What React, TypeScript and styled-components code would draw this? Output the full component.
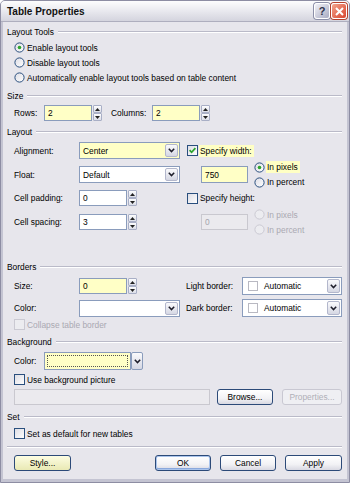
import React from "react";
import styled, { createGlobalStyle } from "styled-components";

type Tone = "yellow" | "white" | "disabled";

const GlobalStyle = createGlobalStyle`
  * { box-sizing: border-box; }
  html, body { margin: 0; padding: 0; background: #ffffff; }
  body {
    font-family: "Liberation Sans", Arial, sans-serif;
    font-size: 8.4px;
    color: #000;
  }
`;

const Window = styled.div`
  width: 350px;
  height: 483px;
  display: flex;
  flex-direction: column;
  background: #c4c4d2;
  border: 1px solid #8d8da3;
  border-radius: 5px 5px 0 0;
  overflow: hidden;
`;

const TitleBar = styled.div`
  height: 21px;
  flex: none;
  display: flex;
  align-items: center;
  padding: 0 2px 0 6px;
  background: linear-gradient(#fdfdfe 0%, #ededf2 40%, #d4d4de 100%);
  border-bottom: 1px solid #aeaebe;
`;

const Title = styled.div`
  flex: 1;
  font-size: 10px;
  font-weight: bold;
  color: #111;
`;

const CaptionButton = styled.div<{ $close?: boolean }>`
  width: 16px;
  height: 16px;
  margin-left: 1px;
  display: flex;
  align-items: center;
  justify-content: center;
  border: 1px solid #ffffff;
  border-radius: 3px;
  font-size: 11px;
  font-weight: bold;
  color: ${(p) => (p.$close ? "#fff" : "#30324a")};
  background: ${(p) =>
    p.$close
      ? "linear-gradient(135deg, #f3a48c, #d9452e)"
      : "linear-gradient(135deg, #f2f2f7, #a8abc2)"};
  box-shadow: 0 0 0 1px ${(p) => (p.$close ? "#b5402c" : "#8c8fa8")};
`;

const Body = styled.div`
  flex: 1;
  margin: 0 2px 3px;
  background: #e7e6ec;
  padding: 4px 5px 0 4px;
  display: flex;
  flex-direction: column;
`;

const Legend = styled.div<{ $mt?: number }>`
  display: flex;
  align-items: center;
  gap: 4px;
  height: 12px;
  margin-top: ${(p) => p.$mt ?? 0}px;

  &::after {
    content: "";
    flex: 1;
    border-top: 1px solid #babac8;
    border-bottom: 1px solid #ffffff;
  }
`;

const Content = styled.div`
  display: flex;
  flex-direction: column;
  padding-left: 7px;
`;

const Row = styled.div<{ $h?: number; $mt?: number }>`
  display: flex;
  align-items: center;
  height: ${(p) => p.$h ?? 17}px;
  margin-top: ${(p) => p.$mt ?? 0}px;
`;

const Half = styled.div<{ $w: number }>`
  display: flex;
  align-items: center;
  width: ${(p) => p.$w}px;
  height: 100%;
`;

const Label = styled.span<{ $w?: number; $disabled?: boolean }>`
  flex: none;
  width: ${(p) => (p.$w ? `${p.$w}px` : "auto")};
  color: ${(p) => (p.$disabled ? "#aaa9b2" : "#000")};
  white-space: nowrap;
`;

const Hl = styled.span<{ $on?: boolean }>`
  background: ${(p) => (p.$on ? "#ffffc4" : "transparent")};
  padding: 1px 2px 1px 1px;
`;

const Field = styled.div<{ $w: number; $tone: Tone; $h?: number }>`
  flex: none;
  width: ${(p) => p.$w}px;
  height: ${(p) => p.$h ?? 16}px;
  display: flex;
  align-items: center;
  padding-left: 3px;
  border: 1px solid ${(p) => (p.$tone === "disabled" ? "#c9c8cf" : "#8a9cbc")};
  background: ${(p) =>
    p.$tone === "yellow" ? "#ffffc6" : p.$tone === "disabled" ? "#ebeaee" : "#ffffff"};
  color: ${(p) => (p.$tone === "disabled" ? "#a5a4ad" : "#000")};
`;

const SelectBox = styled.div<{ $w: number; $tone: Tone; $h?: number }>`
  flex: none;
  width: ${(p) => p.$w}px;
  height: ${(p) => p.$h ?? 17}px;
  display: flex;
  align-items: stretch;
  border: 1px solid #8a9cbc;
  background: ${(p) => (p.$tone === "yellow" ? "#ffffc6" : "#ffffff")};
`;

const SelectText = styled.div`
  flex: 1;
  display: flex;
  align-items: center;
  gap: 6px;
  padding-left: 3px;
`;

const ArrowBox = styled.div<{ $w?: number }>`
  flex: none;
  width: ${(p) => p.$w ?? 13}px;
  margin: 1px;
  border: 1px solid #b3b7cc;
  border-radius: 2px;
  background: linear-gradient(#fafafc, #d5d7e3);
  display: flex;
  align-items: center;
  justify-content: center;
`;

const Swatch = styled.span`
  width: 10px;
  height: 10px;
  margin-left: 2px;
  border: 1px solid #b9b9c2;
  background: #fff;
`;

const ColorPick = styled.div`
  display: flex;
  height: 18px;
`;

const ColorMain = styled.div`
  width: 87px;
  border: 1px solid #8a9cbc;
  background: #ffffc6;
  padding: 2px;
`;

const FocusRect = styled.div`
  height: 100%;
  border: 1px dotted #555;
`;

const ColorArrow = styled(ArrowBox)`
  margin: 0;
  width: 12px;
  border-color: #8a9cbc;
`;

const SpinBox = styled.div`
  flex: none;
  display: flex;
  flex-direction: column;
  margin-left: 1px;
  height: 16px;
`;

const SpinHalf = styled.div`
  width: 9px;
  height: 8px;
  border: 1px solid #a9afc6;
  border-radius: 1px;
  background: linear-gradient(#fdfdfe, #dcdee8);
  display: flex;
  align-items: center;
  justify-content: center;
`;

const Toggle = styled.label<{ $disabled?: boolean }>`
  display: flex;
  align-items: center;
  gap: 1px;
  height: 15px;
  color: ${(p) => (p.$disabled ? "#aaa9b2" : "#000")};
  white-space: nowrap;
`;

const Stack = styled.div<{ $mt?: number }>`
  display: flex;
  flex-direction: column;
  margin-top: ${(p) => p.$mt ?? 0}px;
`;

const Spacer = styled.div<{ $w: number }>`
  flex: none;
  width: ${(p) => p.$w}px;
`;

const Separator = styled.div`
  margin-top: 6px;
  border-top: 1px solid #babac8;
  border-bottom: 1px solid #ffffff;
`;

const ButtonRow = styled.div`
  display: flex;
  align-items: center;
  height: 17px;
  margin-top: 6px;
  padding-left: 7px;
`;

const Btn = styled.div<{ $variant?: "style" | "default" | "disabled"; $w?: number }>`
  flex: none;
  width: ${(p) => p.$w ?? 56}px;
  height: 16px;
  display: flex;
  align-items: center;
  justify-content: center;
  border-radius: 3px;
  border: 1px solid ${(p) => (p.$variant === "disabled" ? "#c9c8d2" : "#2c4a78")};
  color: ${(p) => (p.$variant === "disabled" ? "#b0afb8" : "#000")};
  background: ${(p) =>
    p.$variant === "style"
      ? "linear-gradient(#fdfde2, #e9e9b4)"
      : p.$variant === "disabled"
      ? "#efeff3"
      : "linear-gradient(#ffffff, #f2f2f5 60%, #d9d9e2)"};
  box-shadow: ${(p) =>
    p.$variant === "default" ? "inset 0 0 0 1px #aac4ec, inset 0 -1px 0 1px #8aa8dc" : "none"};
`;

function Chevron() {
  return (
    <svg width="7" height="5" viewBox="0 0 7 5">
      <path d="M0.8 0.8 L3.5 3.6 L6.2 0.8" fill="none" stroke="#1d1d2a" strokeWidth="1.5" />
    </svg>
  );
}

function Spin() {
  return (
    <SpinBox>
      <SpinHalf>
        <svg width="5" height="3" viewBox="0 0 5 3">
          <path d="M0 3 L2.5 0 L5 3 Z" fill="#222" />
        </svg>
      </SpinHalf>
      <SpinHalf>
        <svg width="5" height="3" viewBox="0 0 5 3">
          <path d="M0 0 L2.5 3 L5 0 Z" fill="#222" />
        </svg>
      </SpinHalf>
    </SpinBox>
  );
}

function Radio({ label, checked, disabled, hl }: { label: string; checked?: boolean; disabled?: boolean; hl?: boolean }) {
  const ring = disabled ? "#cac9d2" : "#2a4f7e";
  return (
    <Toggle $disabled={disabled}>
      <svg width="11" height="11" viewBox="0 0 11 11">
        <defs>
          <linearGradient id="rg" x1="0" y1="0" x2="1" y2="1">
            <stop offset="0" stopColor="#dcdce4" />
            <stop offset="1" stopColor="#ffffff" />
          </linearGradient>
        </defs>
        <circle cx="5.5" cy="5.5" r="4.6" fill={disabled ? "#ececf0" : "url(#rg)"} stroke={ring} />
        {checked && <circle cx="5.5" cy="5.5" r="1.8" fill="#2ca52c" />}
      </svg>
      <Hl $on={hl}>{label}</Hl>
    </Toggle>
  );
}

function Check({ label, checked, disabled, hl }: { label: string; checked?: boolean; disabled?: boolean; hl?: boolean }) {
  const edge = disabled ? "#cac9d2" : "#2a4f7e";
  return (
    <Toggle $disabled={disabled}>
      <svg width="11" height="11" viewBox="0 0 11 11">
        <defs>
          <linearGradient id="cg" x1="0" y1="0" x2="1" y2="1">
            <stop offset="0" stopColor="#dcdce4" />
            <stop offset="1" stopColor="#ffffff" />
          </linearGradient>
        </defs>
        <rect x="0.5" y="0.5" width="10" height="10" fill={disabled ? "#ececf0" : "url(#cg)"} stroke={edge} />
        {checked && <path d="M2.6 5.2 L4.6 7.3 L8.4 3.1" fill="none" stroke="#2ca52c" strokeWidth="1.7" />}
      </svg>
      <Hl $on={hl}>{label}</Hl>
    </Toggle>
  );
}

function Select({ value, w, tone = "white", swatch, h }: { value: string; w: number; tone?: Tone; swatch?: boolean; h?: number }) {
  return (
    <SelectBox $w={w} $tone={tone} $h={h}>
      <SelectText>
        {swatch && <Swatch />}
        {value}
      </SelectText>
      <ArrowBox>
        <Chevron />
      </ArrowBox>
    </SelectBox>
  );
}

export default function App() {
  return (
    <>
      <GlobalStyle />
      <Window>
        <TitleBar>
          <Title>Table Properties</Title>
          <CaptionButton>?</CaptionButton>
          <CaptionButton $close>
            <svg width="9" height="9" viewBox="0 0 9 9">
              <path d="M1 1 L8 8 M8 1 L1 8" stroke="#fff" strokeWidth="2" />
            </svg>
          </CaptionButton>
        </TitleBar>
        <Body>
          <Legend>Layout Tools</Legend>
          <Content>
            <Stack $mt={2}>
              <Radio label="Enable layout tools" checked />
              <Radio label="Disable layout tools" />
              <Radio label="Automatically enable layout tools based on table content" />
            </Stack>
          </Content>

          <Legend $mt={5}>Size</Legend>
          <Content>
            <Row $h={16} $mt={3}>
              <Label $w={30}>Rows:</Label>
              <Field $w={48} $tone="yellow">2</Field>
              <Spin />
              <Spacer $w={9} />
              <Label $w={41}>Columns:</Label>
              <Field $w={48} $tone="yellow">2</Field>
              <Spin />
            </Row>
          </Content>

          <Legend $mt={5}>Layout</Legend>
          <Content>
            <Row $mt={4}>
              <Half $w={173}>
                <Label $w={65}>Alignment:</Label>
                <Select value="Center" w={101} tone="yellow" />
              </Half>
              <Check label="Specify width:" checked hl />
            </Row>
            <Row $mt={7}>
              <Half $w={173}>
                <Label $w={65}>Float:</Label>
                <Select value="Default" w={101} />
              </Half>
              <Spacer $w={14} />
              <Field $w={47} $tone="yellow" $h={17}>750</Field>
              <Spacer $w={6} />
              <Stack>
                <Radio label="In pixels" checked hl />
                <Radio label="In percent" />
              </Stack>
            </Row>
            <Row $mt={7} $h={16}>
              <Half $w={173}>
                <Label $w={65}>Cell padding:</Label>
                <Field $w={48} $tone="white">0</Field>
                <Spin />
              </Half>
              <Check label="Specify height:" />
            </Row>
            <Row $mt={8} $h={16}>
              <Half $w={173}>
                <Label $w={65}>Cell spacing:</Label>
                <Field $w={48} $tone="white">3</Field>
                <Spin />
              </Half>
              <Spacer $w={14} />
              <Field $w={47} $tone="disabled" $h={16}>0</Field>
              <Spacer $w={6} />
              <Stack>
                <Radio label="In pixels" disabled />
                <Radio label="In percent" disabled />
              </Stack>
            </Row>
          </Content>

          <Legend $mt={31}>Borders</Legend>
          <Content>
            <Row $mt={4} $h={18}>
              <Half $w={173}>
                <Label $w={65}>Size:</Label>
                <Field $w={48} $tone="yellow">0</Field>
                <Spin />
              </Half>
              <Label $w={56}>Light border:</Label>
              <Select value="Automatic" w={100} swatch h={18} />
            </Row>
            <Row $mt={4} $h={18}>
              <Half $w={173}>
                <Label $w={65}>Color:</Label>
                <Select value="" w={101} />
              </Half>
              <Label $w={56}>Dark border:</Label>
              <Select value="Automatic" w={100} swatch h={18} />
            </Row>
            <Row $mt={1} $h={13}>
              <Check label="Collapse table border" disabled />
            </Row>
          </Content>

          <Legend $mt={5}>Background</Legend>
          <Content>
            <Row $mt={4} $h={18}>
              <Label $w={30}>Color:</Label>
              <ColorPick>
                <ColorMain>
                  <FocusRect />
                </ColorMain>
                <ColorArrow>
                  <Chevron />
                </ColorArrow>
              </ColorPick>
            </Row>
            <Row $mt={3} $h={13}>
              <Check label="Use background picture" />
            </Row>
            <Row $mt={3} $h={16}>
              <Field $w={196} $tone="disabled" />
              <Spacer $w={7} />
              <Btn>Browse...</Btn>
              <Spacer $w={9} />
              <Btn $variant="disabled" $w={60}>Properties...</Btn>
            </Row>
          </Content>

          <Legend $mt={6}>Set</Legend>
          <Content>
            <Row $mt={4} $h={13}>
              <Check label="Set as default for new tables" />
            </Row>
          </Content>

          <Separator />
          <ButtonRow>
            <Btn $variant="style" $w={57}>Style...</Btn>
            <Spacer $w={84} />
            <Btn $variant="default">OK</Btn>
            <Spacer $w={9} />
            <Btn>Cancel</Btn>
            <Spacer $w={9} />
            <Btn $w={57}>Apply</Btn>
          </ButtonRow>
        </Body>
      </Window>
    </>
  );
}
